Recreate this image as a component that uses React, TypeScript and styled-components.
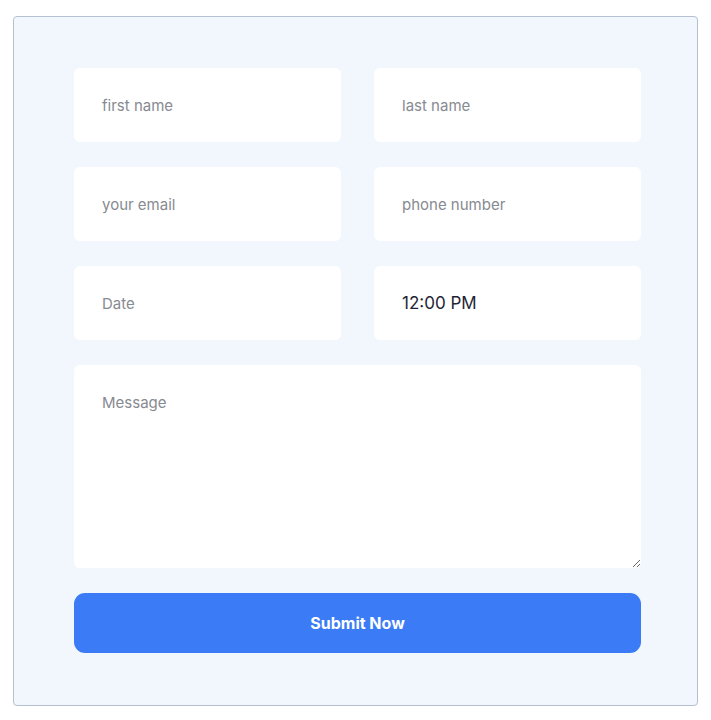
import React from "react";
import styled, { createGlobalStyle } from "styled-components";

const GlobalStyle = createGlobalStyle`
  * { box-sizing: border-box; }
  body {
    margin: 0;
    background: #ffffff;
    font-family: "Inter", "Open Sans", sans-serif;
  }
`;

const Page = styled.div`
  padding: 16px 13px 14px 13px;
`;

const Card = styled.form`
  width: 685px;
  border: 1px solid #b4bfd0;
  border-radius: 4px;
  background: #f2f7fe;
  padding: 51px 56px 52px 60px;
  display: flex;
  flex-direction: column;
  gap: 25px;
`;

const Row = styled.div`
  display: grid;
  grid-template-columns: 1fr 1fr;
  column-gap: 33px;
`;

const Field = styled.input`
  width: 100%;
  height: 74px;
  border: none;
  outline: none;
  border-radius: 6px;
  background: #ffffff;
  padding: 0 28px;
  font-family: "Inter", "Open Sans", sans-serif;
  font-size: ${(p) => (p.value ? "17px" : "15px")};
  color: #1f2434;
  &::placeholder {
    color: #878a91;
  }
`;

const Message = styled.textarea`
  width: 100%;
  height: 203px;
  border: none;
  outline: none;
  border-radius: 6px;
  background: #ffffff;
  padding: 28px 28px;
  font-family: "Inter", "Open Sans", sans-serif;
  font-size: 15px;
  color: #1f2434;
  display: block;
  &::placeholder {
    color: #878a91;
  }
`;

const Submit = styled.button`
  width: 100%;
  height: 60px;
  border: none;
  border-radius: 11px;
  background: #3b7cf6;
  color: #ffffff;
  font-family: "Inter", "Open Sans", sans-serif;
  font-weight: 700;
  font-size: 16px;
  cursor: pointer;
`;

const App = () => {
  return (
    <Page>
      <GlobalStyle />
      <Card onSubmit={(e) => e.preventDefault()}>
        <Row>
          <Field type="text" placeholder="first name" />
          <Field type="text" placeholder="last name" />
        </Row>
        <Row>
          <Field type="email" placeholder="your email" />
          <Field type="text" placeholder="phone number" />
        </Row>
        <Row>
          <Field type="text" placeholder="Date" />
          <Field type="text" value="12:00 PM" readOnly />
        </Row>
        <Message placeholder="Message" />
        <Submit type="submit">Submit Now</Submit>
      </Card>
    </Page>
  );
};

export default App;
